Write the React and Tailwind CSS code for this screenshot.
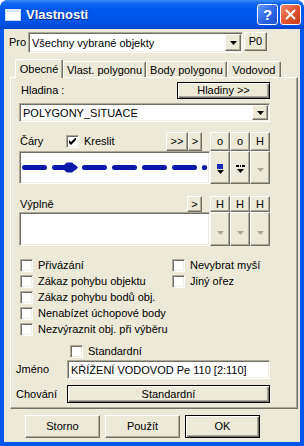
import React from 'react'

const raised =
  'border border-t-white border-l-white border-r-[#716f64] border-b-[#716f64] shadow-[inset_-1px_-1px_#aca899]'
const sunken =
  'border border-t-[#aca899] border-l-[#aca899] border-r-white border-b-white shadow-[inset_1px_1px_#716f64,inset_-1px_-1px_#f1efe2]'
const strong =
  'border border-black shadow-[inset_1px_1px_white,inset_-1px_-1px_#716f64,inset_-2px_-2px_#aca899]'

function Btn({ className = '', children }) {
  return (
    <div className={`flex items-center justify-center bg-[#ece9d8] shrink-0 ${raised} ${className}`}>
      {children}
    </div>
  )
}

function DefBtn({ className = '', children }) {
  return (
    <div className={`flex items-center justify-center bg-[#ece9d8] shrink-0 ${strong} ${className}`}>
      {children}
    </div>
  )
}

function Arrow({ color = '#000' }) {
  return (
    <svg width="7" height="4" viewBox="0 0 7 4">
      <polygon points="0,0 7,0 3.5,4" fill={color} />
    </svg>
  )
}

function Combo({ className = '', text }) {
  return (
    <div className={`flex bg-white p-[1px] ${sunken} ${className}`}>
      <div className="flex-1 flex items-center pl-[2px] pt-[1px]">{text}</div>
      <Btn className="w-[16px]">
        <Arrow />
      </Btn>
    </div>
  )
}

function Check({ checked }) {
  return (
    <span className={`w-[13px] h-[13px] bg-white shrink-0 flex items-center justify-center ${sunken}`}>
      {checked && (
        <svg width="7" height="7" viewBox="0 0 7 7">
          <path d="M0 2 L2 4 L7 -1 L7 2 L2 7 L0 5 Z" fill="#000" />
        </svg>
      )}
    </span>
  )
}

function CheckRow({ label, checked }) {
  return (
    <div className="h-[16px] flex items-center">
      <Check checked={checked} />
      <span className="ml-[5px] whitespace-nowrap">{label}</span>
    </div>
  )
}

function Tab({ selected, className = '', children }) {
  if (selected) {
    return (
      <div
        className={`relative z-10 -mb-[1px] h-[19px] bg-[#ece9d8] flex items-center justify-center border-t border-l border-r border-t-white border-l-white border-r-[#716f64] shadow-[inset_-1px_0_#aca899] rounded-t-[2px] ${className}`}
      >
        {children}
      </div>
    )
  }
  return (
    <div
      className={`h-[16px] bg-[#ece9d8] flex items-center justify-center pt-[1px] border-t border-l border-r border-t-white border-l-white border-r-[#716f64] shadow-[inset_-1px_0_#aca899] rounded-t-[2px] ${className}`}
    >
      {children}
    </div>
  )
}

function LinePreview() {
  const dashes = [
    [2, 27],
    [62, 87],
    [92, 117],
    [122, 147],
    [152, 177],
  ]
  return (
    <svg width="189" height="31" viewBox="0 0 189 31">
      {dashes.map(([a, b]) => (
        <line key={a} x1={a + 2.5} y1="15.5" x2={b - 2.5} y2="15.5" stroke="#0c18a8" strokeWidth="5" strokeLinecap="round" />
      ))}
      <line x1="34.5" y1="15.5" x2="54.5" y2="15.5" stroke="#0c18a8" strokeWidth="5" strokeLinecap="round" />
      <path d="M41 15.5 L47 10.5 L52 10.5 L58 15.5 L52 20.5 L47 20.5 Z" fill="#0c18a8" />
      <circle cx="184.5" cy="15.5" r="2.6" fill="#0c18a8" />
    </svg>
  )
}

function TitleBar() {
  return (
    <div className="h-[29px] shrink-0 flex items-center rounded-t-[7px] bg-[linear-gradient(to_bottom,#3b8cf8_0%,#1068f5_12%,#0058ee_30%,#0056ea_70%,#004ee0_90%,#0040cc_100%)]">
      <div className="ml-[5px] w-[16px] h-[12px] bg-white border border-[#c8d6f0] border-t-[3px] border-t-[#dfe8fa]" />
      <span className="ml-[5px] text-white font-bold text-[13px] [text-shadow:1px_1px_0_#0a2a8a]">Vlastnosti</span>
      <div className="ml-auto mr-[3px] flex gap-[2px]">
        <div className="w-[21px] h-[21px] rounded-[3px] border border-white flex items-center justify-center bg-[linear-gradient(135deg,#5d95f8,#2a62e6_60%,#1d50d0)]">
          <span className="text-white font-bold text-[15px] leading-none">?</span>
        </div>
        <div className="w-[21px] h-[21px] rounded-[3px] border border-white flex items-center justify-center bg-[linear-gradient(135deg,#f08a6a,#e0522e_55%,#c9381a)]">
          <svg width="11" height="11" viewBox="0 0 11 11">
            <path d="M1.5 1.5 L9.5 9.5 M9.5 1.5 L1.5 9.5" stroke="#fff" strokeWidth="2" strokeLinecap="round" />
          </svg>
        </div>
      </div>
    </div>
  )
}

export default function App() {
  return (
    <div className="w-[304px] h-[446px] bg-[#0055ea] rounded-t-[8px] flex flex-col overflow-hidden font-['Liberation_Sans',Arial,sans-serif] text-[11px] leading-none text-black">
      <TitleBar />
      <div className="flex-1 mx-[4px] mb-[4px] bg-[#ece9d8] flex flex-col">
        {/* Pro */}
        <div className="mt-[3px] h-[21px] flex items-center">
          <span className="ml-[5px] w-[19px]">Pro</span>
          <Combo className="w-[215px] h-[21px]" text="Všechny vybrané objekty" />
          <Btn className="ml-[1px] w-[23px] h-[19px] self-start">P0</Btn>
        </div>

        {/* tabs */}
        <div className="mt-[6px] ml-[11px] h-[18px] flex items-end">
          <Tab selected className="w-[48px]">Obecné</Tab>
          <Tab className="w-[83px]">Vlast. polygonu</Tab>
          <Tab className="w-[81px]">Body polygonu</Tab>
          <Tab className="w-[54px]">Vodovod</Tab>
        </div>

        {/* panel */}
        <div className={`ml-[6px] w-[288px] pl-[8px] pb-[5px] flex flex-col ${raised}`}>
          <div className="mt-[4px] h-[17px] w-[251px] flex items-center">
            <span className="ml-[2px]">Hladina :</span>
            <DefBtn className="ml-auto w-[93px] h-[17px]">Hladiny &gt;&gt;</DefBtn>
          </div>
          <Combo className="mt-[4px] w-[251px] h-[19px]" text="POLYGONY_SITUACE" />

          {/* Cary */}
          <div className="mt-[10px] h-[19px] w-[251px] flex items-center">
            <span className="ml-[1px] w-[46px]">Čáry</span>
            <Check checked />
            <span className="ml-[5px]">Kreslit</span>
            <Btn className="ml-auto w-[22px] h-[19px]">&gt;&gt;</Btn>
            <Btn className="w-[14px] h-[19px]">&gt;</Btn>
            <Btn className="ml-[8px] w-[20px] h-[19px]">o</Btn>
            <Btn className="w-[20px] h-[19px]">o</Btn>
            <Btn className="w-[20px] h-[19px]">H</Btn>
          </div>
          <div className="h-[33px] flex">
            <div className={`w-[191px] bg-white ${sunken}`}>
              <LinePreview />
            </div>
            <Btn className="w-[20px] h-[33px] flex-col gap-[1px] pt-[2px]">
              <div className="w-[6px] h-[5px] bg-[#1428b8]" />
              <Arrow />
            </Btn>
            <Btn className="w-[20px] h-[33px] flex-col gap-[2px] pt-[2px]">
              <svg width="9" height="2" viewBox="0 0 9 2">
                <rect x="0" y="0" width="3" height="2" fill="#000" />
                <rect x="4" y="0" width="1" height="2" fill="#000" />
                <rect x="6" y="0" width="3" height="2" fill="#000" />
              </svg>
              <Arrow />
            </Btn>
            <Btn className="w-[20px] h-[33px] pt-[4px]">
              <Arrow color="#aca899" />
            </Btn>
          </div>

          {/* Vyplne */}
          <div className="mt-[12px] h-[16px] w-[251px] flex items-center">
            <span className="ml-[1px]">Výplně</span>
            <Btn className="ml-auto w-[15px] h-[16px]">&gt;</Btn>
            <Btn className="ml-[8px] w-[20px] h-[16px]">H</Btn>
            <Btn className="w-[20px] h-[16px]">H</Btn>
            <Btn className="w-[20px] h-[16px]">H</Btn>
          </div>
          <div className="h-[34px] flex">
            <div className={`w-[191px] bg-white ${sunken}`} />
            <Btn className="w-[20px] h-[34px] pt-[8px]">
              <Arrow color="#aca899" />
            </Btn>
            <Btn className="w-[20px] h-[34px] pt-[8px]">
              <Arrow color="#aca899" />
            </Btn>
            <Btn className="w-[20px] h-[34px] pt-[8px]">
              <Arrow color="#aca899" />
            </Btn>
          </div>

          {/* checkboxes */}
          <div className="mt-[11px] ml-[1px] grid grid-cols-[152px_auto]">
            <div className="flex flex-col">
              <CheckRow label="Přivázání" />
              <CheckRow label="Zákaz pohybu objektu" />
              <CheckRow label="Zákaz pohybu bodů obj." />
              <CheckRow label="Nenabízet úchopové body" />
              <CheckRow label="Nezvýraznit obj. při výběru" />
            </div>
            <div className="flex flex-col">
              <CheckRow label="Nevybrat myší" />
              <CheckRow label="Jiný ořez" />
            </div>
          </div>

          <div className="mt-[6px] ml-[51px]">
            <CheckRow label="Standardní" />
          </div>

          <div className="mt-[1px] -ml-[3px] h-[19px] flex items-center">
            <span className="w-[51px]">Jméno</span>
            <div className={`w-[203px] h-[19px] bg-white flex items-center pl-[3px] pt-[1px] ${sunken}`}>
              KŘÍŽENÍ VODOVOD Pe 110 [2:110]
            </div>
          </div>
          <div className="mt-[6px] -ml-[3px] h-[18px] flex items-center">
            <span className="w-[51px]">Chování</span>
            <DefBtn className="w-[203px] h-[18px]">Standardní</DefBtn>
          </div>
        </div>

        {/* bottom buttons */}
        <div className="mt-[6px] ml-[21px] flex gap-[5px]">
          <Btn className="w-[75px] h-[23px]">Storno</Btn>
          <Btn className="w-[75px] h-[23px]">Použít</Btn>
          <DefBtn className="w-[75px] h-[23px]">OK</DefBtn>
        </div>
      </div>
    </div>
  )
}
